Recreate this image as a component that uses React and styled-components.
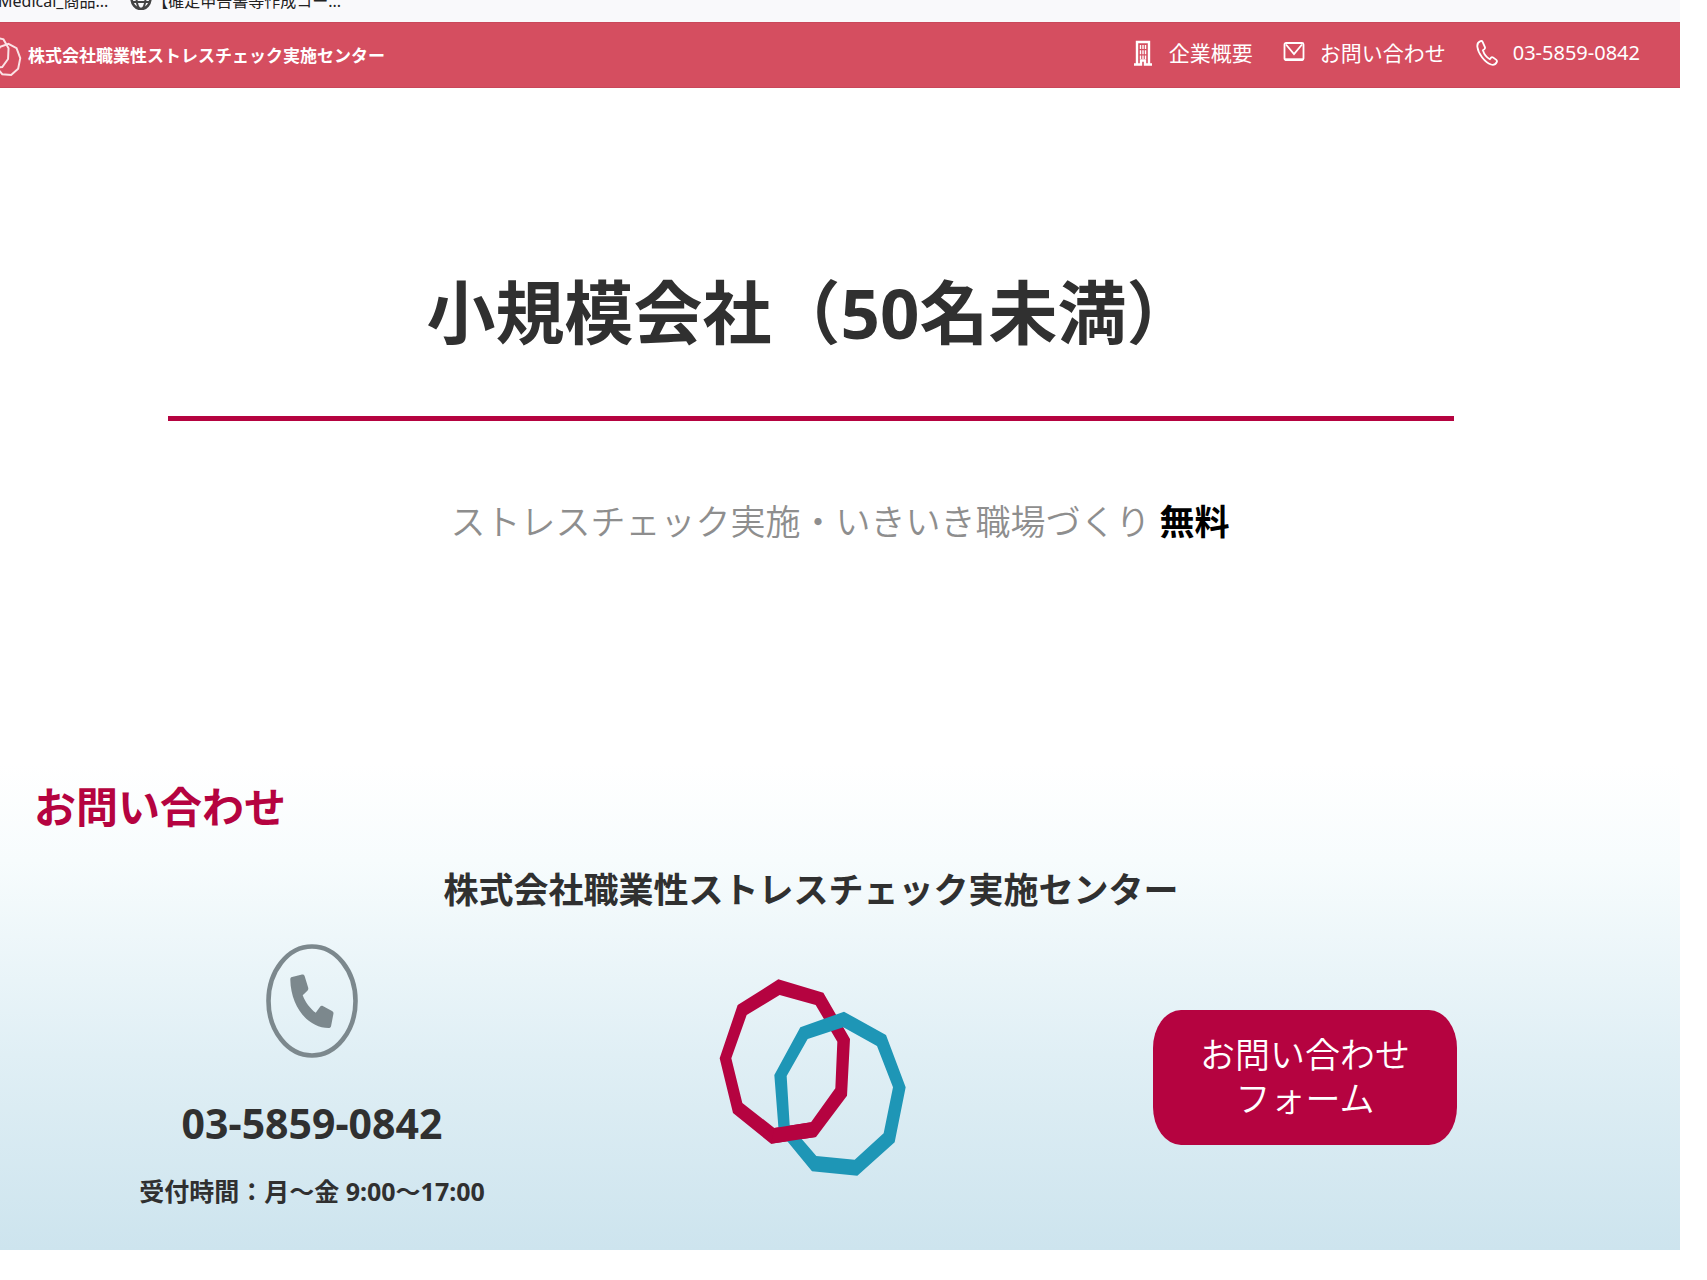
import styled, { createGlobalStyle } from "styled-components";

const CRIMSON = "#b50340";

export default function App() {
  return (
    <Page>
      <GlobalStyle />
      <BookmarkBar>
        <Bookmark href="#">Medical_商品...</Bookmark>
        <Bookmark href="#">
          <GlobeIcon />
          【確定申告書等作成コー...
        </Bookmark>
      </BookmarkBar>
      <Header>
        <Brand href="#">
          <BrandMark viewBox="118 108 566 598">
            <polygon points="300,136 422,171 494,296 487,450 404,564 281,582 176,498 139,350 190,205" />
            <polygon points="494,233 608,296 661,437 631,588 531,678 405,666 315,560 304,401 375,275" />
          </BrandMark>
          株式会社職業性ストレスチェック実施センター
        </Brand>
        <Nav>
          <NavLink href="#company">
            <BuildingIcon />
            企業概要
          </NavLink>
          <NavLink href="#contact">
            <LetterIcon />
            お問い合わせ
          </NavLink>
          <NavLink href="tel:03-5859-0842" $tel>
            <HandsetIcon />
            03-5859-0842
          </NavLink>
        </Nav>
      </Header>
      <main>
        <Hero>
          <HeroTop>
            <Title>小規模会社（50名未満）</Title>
            <Rule />
          </HeroTop>
          <Lead>
            ストレスチェック実施・いきいき職場づくり <strong>無料</strong>
          </Lead>
        </Hero>
        <Contact id="contact">
          <ContactTitle>お問い合わせ</ContactTitle>
          <Company>株式会社職業性ストレスチェック実施センター</Company>
          <Columns>
            <Column>
              <PhoneBadge />
              <PhoneNumber>03-5859-0842</PhoneNumber>
              <Hours>受付時間：月～金 9:00～17:00</Hours>
            </Column>
            <Column>
              <RingsLogo />
            </Column>
            <Column>
              <FormButton type="button">
                お問い合わせ
                <br />
                フォーム
              </FormButton>
            </Column>
          </Columns>
        </Contact>
      </main>
    </Page>
  );
}

function GlobeIcon() {
  return (
    <svg width="22" height="24" viewBox="0 0 22 24" fill="none" stroke="#444" strokeWidth="2">
      <ellipse cx="11" cy="12" rx="9.5" ry="11" strokeWidth="2.6" />
      <ellipse cx="11" cy="12" rx="4.5" ry="11" />
      <path d="M2 8h18M2 16h18" />
    </svg>
  );
}

function BuildingIcon() {
  return (
    <NavIcon viewBox="0 0 22 26" strokeWidth="2.4">
      <path d="M5 24V2h12v22M2 24.500h7v-4h4v4h7" />
      <path d="M8.500 5v14M11 5v14M13.500 5v14" strokeWidth="1.4" strokeDasharray="4 1.200" />
    </NavIcon>
  );
}

function LetterIcon() {
  return (
    <NavIcon viewBox="0 0 22 26">
      <rect x="1.5" y="3" width="19" height="17" rx="1.5" strokeWidth="1.8" />
      <path d="M3 4.5l8 9.5 8-9.5" strokeWidth="1.8" />
      <path d="M2 19.5h18" strokeWidth="2.4" />
    </NavIcon>
  );
}

function HandsetIcon() {
  return (
    <NavIcon viewBox="0 0 22 26" strokeWidth="1.8">
      <path d="M4.5 1.2C2.500 2 1 4.200 1.400 7c.8 6.800 7.500 15.500 13.600 17.500 2.300.7 4.800-.5 5.800-2.500.4-.9.2-1.500-.5-2.100l-3.300-2.500c-.7-.5-1.400-.4-2 .3l-1.100 1.500c-2.900-1.500-6-5.500-7-8.900l1.500-1.200c.7-.6.8-1.200.5-2L6.600 1.900c-.4-.8-1.100-1.100-2.100-.7z" />
    </NavIcon>
  );
}

function PhoneBadge() {
  return (
    <svg width="92" height="114" viewBox="0 0 92 114">
      <ellipse cx="46" cy="57" rx="43.500" ry="54.500" fill="none" stroke="#7c888d" strokeWidth="4.600" />
      <path
        fill="#7c888d"
        d="M26 33l10-2.500c1.300-.3 2.300.4 2.700 1.700l3.500 11.500c.3 1.200 0 2.200-.8 3l-4.700 4.500c2.800 7.200 7.500 13.500 13 17.500l4.200-5.800c.8-1 1.800-1.300 2.900-.8l9.200 4.800c1.200.6 1.700 1.700 1.400 3l-2.300 12c-.3 1.300-1.200 2.100-2.500 2.100C42.500 84 24.800 63.500 24.300 35.500c0-1.300.6-2.200 1.700-2.500z"
      />
    </svg>
  );
}

function RingsLogo() {
  return (
    <svg width="187" height="197" viewBox="120 112 561 591">
      <path
        fill={CRIMSON}
        fillRule="evenodd"
        d="M298 113 433 153 513 292 504 462 411 586 276 606 162 514 122 350 176 190zM302 160 203 220 157 350 190 484 286 559 396 542 469 440 475 300 410 190z"
      />
      <path
        fill="#1e96b6"
        fillRule="evenodd"
        d="M495 210 621 280 680 437 647 602 535 702 399 689 299 567 286 400 364 257zM493 257 386 292 323 403 332 550 412 643 527 654 614 575 642 437 594 313z"
      />
      {/* the red ring passes back over the blue one at the bottom */}
      <path fill={CRIMSON} d="M286 559 396 542 411 586 276 606z" />
    </svg>
  );
}

const GlobalStyle = createGlobalStyle`
  * {
    box-sizing: border-box;
  }
  body {
    margin: 0;
    background: #fff;
    color: #303030;
    font-family: "Noto Sans", "Noto Sans CJK JP", sans-serif;
  }
  h1, h2, h3, p {
    margin: 0;
  }
  a {
    color: inherit;
    text-decoration: none;
  }
`;

const Page = styled.div`
  padding-right: 27px;
`;

const BookmarkBar = styled.div`
  display: flex;
  align-items: flex-end;
  gap: 22px;
  height: 22px;
  padding-bottom: 12px;
  margin-left: -2px;
  overflow: hidden;
  background: #f9f9fb;
`;

const Bookmark = styled.a`
  display: flex;
  align-items: flex-end;
  font-size: 16px;
  line-height: 18px;
  color: #222;
  white-space: nowrap;
`;

const Header = styled.header`
  display: flex;
  align-items: center;
  justify-content: space-between;
  height: 66px;
  padding-right: 40px;
  overflow: hidden;
  border-top: 1px solid #c9485a;
  border-bottom: 1px solid #c9485a;
  background: #d54e60;
  color: #fff;
`;

const Brand = styled.a`
  display: flex;
  align-items: center;
  gap: 6px;
  margin-left: -18px;
  padding-top: 2px;
  font-size: 17px;
  font-weight: 700;
  line-height: 24px;
  white-space: nowrap;
`;

const BrandMark = styled.svg`
  width: 40px;
  height: 42px;
  fill: none;
  stroke: #fbe3e6;
  stroke-width: 28;
`;

const Nav = styled.nav`
  display: flex;
  gap: 30px;
  padding-bottom: 5px;
`;

const NavLink = styled.a`
  display: flex;
  align-items: center;
  gap: 15px;
  font-size: ${(p) => (p.$tel ? "20px" : "21px")};
  line-height: 28px;
  white-space: nowrap;
`;

const NavIcon = styled.svg`
  width: 22px;
  height: 26px;
  fill: none;
  stroke: #fff;
`;

const Hero = styled.section`
  padding: 184px 0 216px;
  text-align: center;
`;

const HeroTop = styled.div`
  padding-right: 58px;
`;

const Title = styled.h1`
  font-size: 69px;
  font-weight: 700;
  line-height: 80px;
`;

const Rule = styled.hr`
  height: 5px;
  margin: 64px 168px 76px;
  border: 0;
  background: ${CRIMSON};
`;

const Lead = styled.p`
  color: #8e8e8e;
  font-size: 35px;
  font-weight: 350;
  line-height: 50px;

  strong {
    color: #000;
    font-weight: 700;
  }
`;

const Contact = styled.section`
  padding: 14px 58px 39px 0;
  background: linear-gradient(#fff, #f7fcfd 20%, #e0eff5 60%, #cde4ee);
`;

const ContactTitle = styled.h2`
  padding-left: 34px;
  color: ${CRIMSON};
  font-size: 42px;
  font-weight: 700;
  line-height: 60px;
`;

const Company = styled.h3`
  margin-top: 28px;
  font-size: 35px;
  font-weight: 700;
  line-height: 50px;
  text-align: center;
`;

const Columns = styled.div`
  display: grid;
  grid-template-columns: 500fr 500fr 486fr;
  align-items: center;
  margin-top: 29px;
  padding: 0 74px 0 62px;
`;

const Column = styled.div`
  display: flex;
  flex-direction: column;
  align-items: center;
`;

const PhoneNumber = styled.p`
  margin-top: 35px;
  font-size: 41px;
  font-weight: 700;
  line-height: 60px;
`;

const Hours = styled.p`
  margin-top: 18px;
  font-size: 25px;
  font-weight: 700;
  line-height: 40px;
  white-space: nowrap;
`;

const FormButton = styled.button`
  width: 304px;
  padding: 23px 0 24px;
  border: 0;
  border-radius: 28px / 38px;
  background: ${CRIMSON};
  color: #fff;
  font: inherit;
  font-size: 35px;
  font-weight: 350;
  line-height: 44px;
`;
